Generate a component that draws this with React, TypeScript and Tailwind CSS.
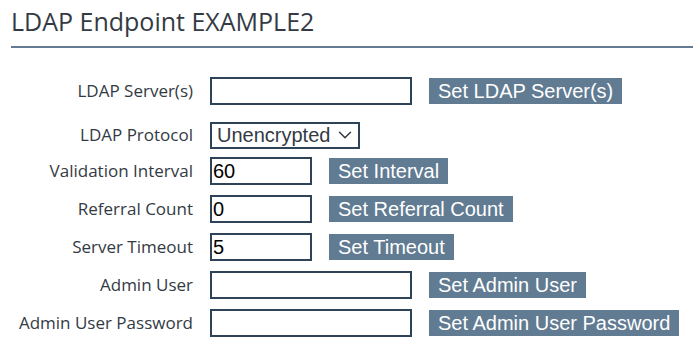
import { ChevronDown } from 'lucide-react'

type Row = {
  label: string
  value?: string
  wide: boolean
  button?: string
  select?: boolean
  gap: string
}

const rows: Row[] = [
  { label: 'LDAP Server(s)', wide: true, button: 'Set LDAP Server(s)', gap: 'mt-0' },
  { label: 'LDAP Protocol', wide: true, select: true, gap: 'mt-[16px]' },
  { label: 'Validation Interval', value: '60', wide: false, button: 'Set Interval', gap: 'mt-[8px]' },
  { label: 'Referral Count', value: '0', wide: false, button: 'Set Referral Count', gap: 'mt-[10px]' },
  { label: 'Server Timeout', value: '5', wide: false, button: 'Set Timeout', gap: 'mt-[10px]' },
  { label: 'Admin User', wide: true, button: 'Set Admin User', gap: 'mt-[10px]' },
  { label: 'Admin User Password', wide: true, button: 'Set Admin User Password', gap: 'mt-[10px]' },
]

const arial = { fontFamily: '"Liberation Sans", Arial, sans-serif' }

export default function App() {
  return (
    <div className="w-[693px] h-[346px] bg-white overflow-hidden" style={{ fontFamily: '"Open Sans", "Noto Sans", sans-serif' }}>
      <div className="pl-[11px] pt-[3px]">
        <h1 className="text-[25px] leading-[36px] text-[#333a44] font-normal">LDAP Endpoint EXAMPLE2</h1>
        <div className="mt-[7px] h-[2px] bg-[#647c92]" />
      </div>

      <div className="mt-[29px] flex flex-col">
        {rows.map((row) => (
          <div key={row.label} className={`flex items-center h-[28px] ${row.gap}`}>
            <div className="w-[193px] text-right text-[17px] text-[#333a44]">{row.label}</div>
            {row.select ? (
              <div
                className="ml-[17px] h-[27px] w-[150px] border-2 border-[#2f4358] flex items-center justify-between pl-[5px] pr-[2px] text-[20px] text-[#333a44]"
                style={arial}
              >
                <span>Unencrypted</span>
                <ChevronDown size={22} strokeWidth={1.6} className="text-[#333a44]" />
              </div>
            ) : (
              <div
                className={`ml-[17px] h-[28px] ${row.wide ? 'w-[202px]' : 'w-[102px]'} border-2 border-[#2f4358] flex items-center pl-[1px] text-[20px] text-black`}
                style={arial}
              >
                {row.value}
              </div>
            )}
            {row.button && (
              <div
                className="ml-[17px] h-[26px] px-[9px] bg-[#607b92] text-white text-[20px] flex items-center"
                style={arial}
              >
                {row.button}
              </div>
            )}
          </div>
        ))}
      </div>
    </div>
  )
}
